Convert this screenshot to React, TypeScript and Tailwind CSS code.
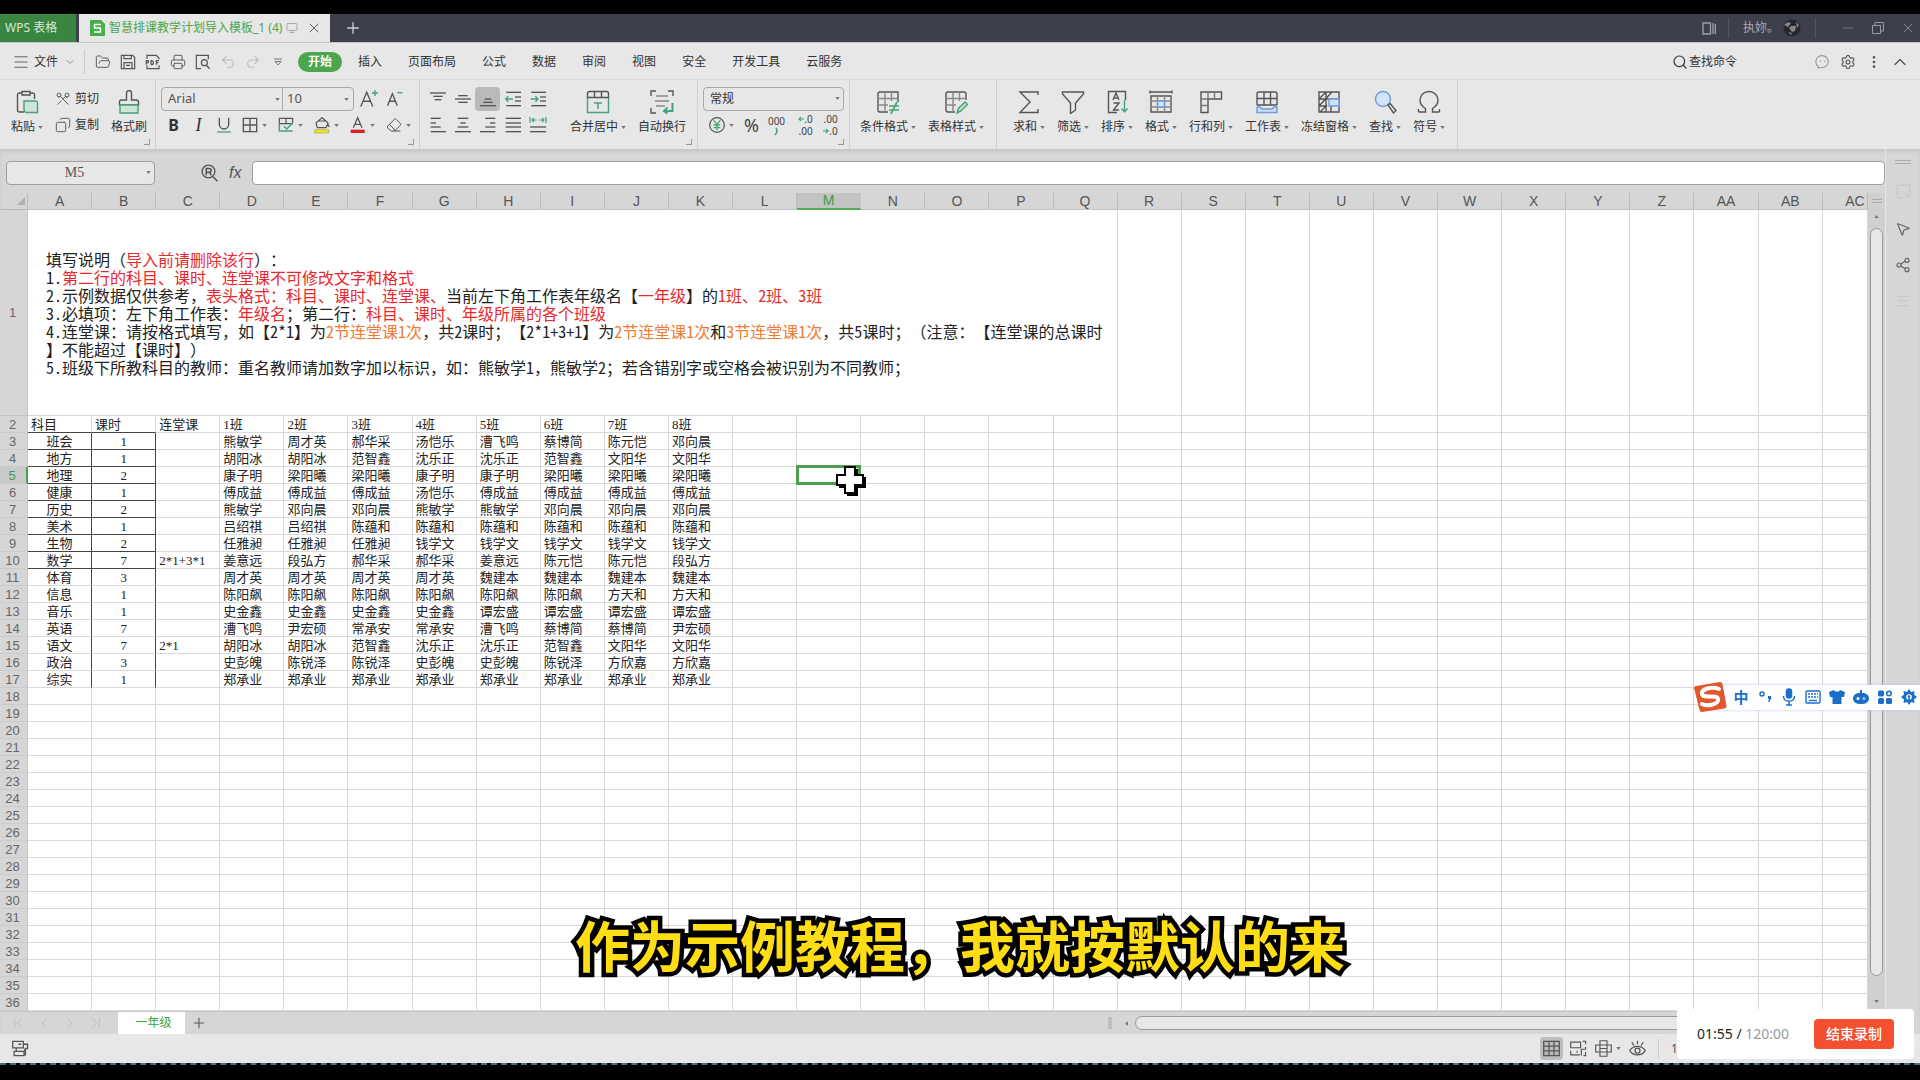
import React, { useState } from "react";
import {
  ChevronDown,
  ChevronLeft,
  ChevronRight,
  ChevronUp,
  ChevronFirst,
  ChevronLast,
  Copy,
  EllipsisVertical,
  Eraser,
  FolderOpen,
  Menu,
  Minus,
  Monitor,
  MousePointer2,
  Plus,
  Printer,
  Redo2,
  Scissors,
  Search,
  Settings,
  Share2,
  Undo2,
  X,
} from "lucide-react";
import { clsx } from "clsx";

const COLUMNS = [
  "A", "B", "C", "D", "E", "F", "G", "H", "I", "J", "K", "L", "M", "N", "O",
  "P", "Q", "R", "S", "T", "U", "V", "W", "X", "Y", "Z", "AA", "AB", "AC",
];

const MENUS = ["插入", "页面布局", "公式", "数据", "审阅", "视图", "安全", "开发工具", "云服务"];

// Sheet rows, starting at row 2
const ROWS: string[][] = [
  ["科目", "课时", "连堂课", "1班", "2班", "3班", "4班", "5班", "6班", "7班", "8班"],
  ["班会", "1", "", "熊敏学", "周才英", "郝华采", "汤恺乐", "漕飞鸣", "蔡博简", "陈元恺", "邓向晨"],
  ["地方", "1", "", "胡阳冰", "胡阳冰", "范智鑫", "沈乐正", "沈乐正", "范智鑫", "文阳华", "文阳华"],
  ["地理", "2", "", "康子明", "梁阳曦", "梁阳曦", "康子明", "康子明", "梁阳曦", "梁阳曦", "梁阳曦"],
  ["健康", "1", "", "傅成益", "傅成益", "傅成益", "汤恺乐", "傅成益", "傅成益", "傅成益", "傅成益"],
  ["历史", "2", "", "熊敏学", "邓向晨", "邓向晨", "熊敏学", "熊敏学", "邓向晨", "邓向晨", "邓向晨"],
  ["美术", "1", "", "吕绍祺", "吕绍祺", "陈蕴和", "陈蕴和", "陈蕴和", "陈蕴和", "陈蕴和", "陈蕴和"],
  ["生物", "2", "", "任雅昶", "任雅昶", "任雅昶", "钱学文", "钱学文", "钱学文", "钱学文", "钱学文"],
  ["数学", "7", "2*1+3*1", "姜意远", "段弘方", "郝华采", "郝华采", "姜意远", "陈元恺", "陈元恺", "段弘方"],
  ["体育", "3", "", "周才英", "周才英", "周才英", "周才英", "魏建本", "魏建本", "魏建本", "魏建本"],
  ["信息", "1", "", "陈阳飙", "陈阳飙", "陈阳飙", "陈阳飙", "陈阳飙", "陈阳飙", "方天和", "方天和"],
  ["音乐", "1", "", "史金鑫", "史金鑫", "史金鑫", "史金鑫", "谭宏盛", "谭宏盛", "谭宏盛", "谭宏盛"],
  ["英语", "7", "", "漕飞鸣", "尹宏硕", "常承安", "常承安", "漕飞鸣", "蔡博简", "蔡博简", "尹宏硕"],
  ["语文", "7", "2*1", "胡阳冰", "胡阳冰", "范智鑫", "沈乐正", "沈乐正", "范智鑫", "文阳华", "文阳华"],
  ["政治", "3", "", "史彭魄", "陈锐泽", "陈锐泽", "史彭魄", "史彭魄", "陈锐泽", "方欣嘉", "方欣嘉"],
  ["综实", "1", "", "郑承业", "郑承业", "郑承业", "郑承业", "郑承业", "郑承业", "郑承业", "郑承业"],
];

const ROW_NUMBERS = Array.from({ length: 35 }, (_, i) => i + 2);

type NotePart = { text: string; tone?: "red" | "orange" };

const red = (text: string): NotePart => ({ text, tone: "red" });
const orange = (text: string): NotePart => ({ text, tone: "orange" });
const plain = (text: string): NotePart => ({ text });

const NOTES: NotePart[][] = [
  [plain("填写说明（"), red("导入前请删除该行"), plain("）：")],
  [plain("1."), red("第二行的科目、课时、连堂课不可修改文字和格式")],
  [
    plain("2.示例数据仅供参考，"),
    red("表头格式：科目、课时、连堂课、"),
    plain("当前左下角工作表年级名【"),
    red("一年级"),
    plain("】的"),
    red("1班、2班、3班"),
  ],
  [plain("3.必填项：左下角工作表："), red("年级名"), plain("；第二行："), red("科目、课时、年级所属的各个班级")],
  [
    plain("4.连堂课：请按格式填写，如【2*1】为"),
    orange("2节连堂课1次"),
    plain("，共2课时；【2*1+3+1】为"),
    orange("2节连堂课1次"),
    plain("和"),
    orange("3节连堂课1次"),
    plain("，共5课时；（注意：【连堂课的总课时"),
  ],
  [plain("】不能超过【课时】）")],
  [plain("5.班级下所教科目的教师：重名教师请加数字加以标识，如：熊敏学1，熊敏学2；若含错别字或空格会被识别为不同教师；")],
];

interface ArtProps {
  size?: number;
  className?: string;
  children: React.ReactNode;
}

function Art({ size = 24, className, children }: ArtProps) {
  return (
    <svg
      width={size}
      height={size}
      viewBox="0 0 24 24"
      fill="none"
      stroke="#555"
      strokeWidth="1.4"
      className={clsx("shrink-0", className)}
      aria-hidden="true"
    >
      {children}
    </svg>
  );
}

function Caret() {
  return (
    <svg width="5" height="3" viewBox="0 0 6 4" className="shrink-0" aria-hidden="true">
      <path d="M0 0h6L3 4z" fill="#777" />
    </svg>
  );
}

const GREEN = "#46a278";
const BLUE = "#6f9ddc";

const art = {
  paste: (
    <Art>
      <path d="M9 22H4.500a2 2 0 0 1-2-2V5a2 2 0 0 1 2-2H7M15 3h2.500a2 2 0 0 1 2 2v4" />
      <path d="M7 1.500h8v3.500H7z" />
      <path d="M9 11h11.500a2 2 0 0 1 2 2v9.500H12a3 3 0 0 1-3-3z" fill="#cfe5da" stroke={GREEN} />
    </Art>
  ),
  brush: (
    <Art>
      <path d="M9.500 10V3a2.500 2.500 0 0 1 5 0v7h5a2 2 0 0 1 2 2v3h-19v-3a2 2 0 0 1 2-2z" />
      <path d="M3 15h18v8H3z" fill="#cfe5da" stroke={GREEN} />
    </Art>
  ),
  merge: (
    <Art>
      <path d="M1.500 8V3.500a2 2 0 0 1 2-2h17a2 2 0 0 1 2 2V8M1.500 7.500h21M8.500 1.500v6M15.500 1.500v6" />
      <path d="M1.500 8v14.500h21V8M8 13h8M12 13v6" stroke={GREEN} />
    </Art>
  ),
  wrap: (
    <Art>
      <path d="M1 6V1h5M18 1h5v5M1 18v5h5" />
      <path d="M6 6h12M5 11h14M6 16h9" stroke="#888" />
      <path d="M22.500 13v8H14m3.500-3.500L14 21l3.500 2.500" stroke={GREEN} strokeWidth="2" />
    </Art>
  ),
  condition: (
    <Art>
      <path d="M12 22H4a2 2 0 0 1-2-2V4a2 2 0 0 1 2-2h18v10" />
      <path d="M2 8.500h20M2 15h10M9 2v20M15.500 2v9" stroke="#888" />
      <path d="M13 16h10M13 20h10M21 12l-6 12" stroke={GREEN} strokeWidth="1.700" />
    </Art>
  ),
  tableStyle: (
    <Art>
      <path d="M11 22H4a2 2 0 0 1-2-2V4a2 2 0 0 1 2-2h16a2 2 0 0 1 2 2v6" />
      <path d="M2 8.500h20M2 15h10M9 2v20M15.500 2v9" stroke="#888" />
      <path d="M13 23l1.500-4.500L21 12l2.500 2.500L17 21z" fill="#bfe0cf" stroke={GREEN} />
    </Art>
  ),
  sum: (
    <Art>
      <path d="M21 5V2H3l10 10L3 22.500h18v-3.500" />
    </Art>
  ),
  filter: (
    <Art>
      <path d="M1.500 2h21v2L14.500 13v7l-5 3.500V13L1.500 4z" />
    </Art>
  ),
  sort: (
    <Art>
      <path d="M12 22.500H3.500V1.500h17V10" />
      <path d="M8 10l3-7 3 7M9 8h4M8.500 13h5.500l-5.500 7H14" />
      <path d="M19.500 10v12m-3-3.500 3 3.500 3-3.500" stroke={GREEN} />
    </Art>
  ),
  format: (
    <Art>
      <path d="M1 2h22M1 .5v3M23 .5v3" />
      <path d="M2 6h20v16H2z" />
      <path d="M2 11h20M2 17h20M8.500 6v16M15.500 6v16" stroke="#888" />
      <path d="M8.500 11h7v6h-7z" fill="#cfdff5" stroke={BLUE} />
    </Art>
  ),
  rowsCols: (
    <Art>
      <path d="M2 2h20.500v7H9v13.500H2z" />
      <path d="M9 2v7M15.500 2v7M2 9h7M2 15.500h7" stroke="#777" />
    </Art>
  ),
  worksheet: (
    <Art>
      <path d="M2 15V4a2 2 0 0 1 2-2h16a2 2 0 0 1 2 2v11M2 8.500h20M9 2v13M15.500 2v13M2 15h20" />
      <path d="M2 17h3l2 2h10l2-2h3v5.500H2z" fill="#cfdff5" stroke={BLUE} />
    </Art>
  ),
  freeze: (
    <Art>
      <path d="M2 2h20v20H2zM9 2v20M2 9h20M2 16h8M14 22v-6M2 9l7-7M2 16l13-14M3 22l7-7" />
      <path d="M12 9h10v7H12z" fill="#cfdff5" stroke={BLUE} />
    </Art>
  ),
  find: (
    <Art>
      <circle cx="10" cy="9" r="7.500" fill="#d3e2f7" stroke={BLUE} />
      <path d="M15 15l2-1.500 6 7-2.500 2.500z" />
    </Art>
  ),
  symbol: (
    <Art>
      <path d="M1.500 22h7v-3.500C4 16 3 13 3 10a9 8.500 0 0 1 18 0c0 3-1 6-5.500 8.500V22h7" />
      <path d="M1.500 19v3M22.500 19v3" />
    </Art>
  ),
};

interface BigButtonProps {
  icon: React.ReactNode;
  label: string;
  caret?: boolean;
}

function BigButton({ icon, label, caret = true }: BigButtonProps) {
  return (
    <button className="flex flex-col items-center gap-[5px] pt-[3px] text-xs leading-4">
      {icon}
      <span className="flex items-center gap-[3px] whitespace-nowrap">
        {label}
        {caret && <Caret />}
      </span>
    </button>
  );
}

function Group({ className, corner, children }: { className?: string; corner?: boolean; children: React.ReactNode }) {
  return (
    <div className={clsx("relative flex border-r border-[#d0d0d0] pt-[7px]", className)}>
      {children}
      {corner && <span className="absolute right-[5px] bottom-1 size-1.5 border-r border-b border-[#999]" />}
    </div>
  );
}

function SmallButton({ label, active, children }: { label: string; active?: boolean; children: React.ReactNode }) {
  return (
    <button
      aria-label={label}
      className={clsx("flex h-6 w-[25px] items-center justify-center rounded-sm", active && "bg-[#b9b9b9]")}
    >
      {children}
    </button>
  );
}

function DropButton({ label, children }: { label: string; children: React.ReactNode }) {
  return (
    <button aria-label={label} className="flex h-6 w-9 items-center gap-1 pl-1.5">
      {children}
      <Caret />
    </button>
  );
}

// Each row is [y, from, to]
function Lines({ rows, children }: { rows: number[][]; children?: React.ReactNode }) {
  return (
    <Art size={16} className="overflow-visible">
      {rows.map(([y, from, to]) => (
        <path key={y} d={`M${from} ${y}H${to}`} strokeWidth="2" />
      ))}
      {children}
    </Art>
  );
}

function SmallArrow({ flip }: { flip?: boolean }) {
  return (
    <svg width="6" height="6" viewBox="0 0 6 6" className={clsx(flip && "rotate-180")} aria-hidden="true">
      <path d="M6 3H1m2-2L1 3l2 2" fill="none" stroke={GREEN} strokeWidth="1.200" />
    </svg>
  );
}

function TitleBar() {
  return (
    <header className="flex h-7 items-center bg-[#3e3f4d] text-xs text-[#a9a9b2]">
      <button className="flex h-full w-[76px] items-center bg-[#3a8641] pl-[5px] text-[#d9e6d9]">WPS 表格</button>
      <div className="ml-[3px] flex h-full items-center bg-[#e7e7e7] pr-2 pl-[11px] text-[#4ba54c]">
        <svg width="15" height="16" viewBox="0 0 15 16" aria-hidden="true">
          <path d="M1 0h10l4 4v12H1a1 1 0 0 1-1-1V1a1 1 0 0 1 1-1z" fill="#46ad4a" />
          <path d="M11 4.500H4.500v3.500h6v4H4" fill="none" stroke="#fff" strokeWidth="1.500" />
        </svg>
        <span className="ml-1 whitespace-nowrap">智慧排课教学计划导入模板_1 (4)</span>
        <Monitor className="ml-1 size-3 text-[#999]" strokeWidth={1.5} />
        <button aria-label="关闭标签" className="ml-2 text-[#666]">
          <X className="size-4" strokeWidth={1.5} />
        </button>
      </div>
      <button aria-label="新建标签" className="ml-3.5 text-[#d0d0d6]">
        <Plus className="size-[18px]" strokeWidth={1.7} />
      </button>
      <div className="ml-auto flex items-center">
        <svg width="14" height="13" viewBox="0 0 14 13" fill="none" stroke="#a0a0aa" strokeWidth="1.300" aria-hidden="true">
          <path d="M1 1h7.500v11H1zM11 1v11M13.300 2v10" />
        </svg>
        <span className="ml-3 h-5 w-px bg-[#55565f]" />
        <span className="ml-3.5 w-9 whitespace-nowrap">执妳。</span>
        <svg width="18" height="18" viewBox="0 0 18 18" className="ml-1" aria-hidden="true">
          <circle cx="9" cy="9" r="8.500" fill="#26262b" />
          <path d="M1 6l4-3 3 1-3 4zM8 7l5 0-1 5-3 1-3-4zM13 3l3 3-2 3zM5 13l4 1-1 2z" fill="#858585" />
        </svg>
        <span className="ml-3.5 h-5 w-px bg-[#55565f]" />
        <button aria-label="最小化" className="ml-6 text-[#85858f]">
          <Minus className="size-4" strokeWidth={1.3} />
        </button>
        <button aria-label="还原" className="ml-4">
          <svg width="12" height="12" viewBox="0 0 12 12" fill="none" stroke="#9a9aa3" aria-hidden="true">
            <path d="M.5 3.500h8v8h-8zM3 3V.5h8.500V9H9" />
          </svg>
        </button>
        <button aria-label="关闭" className="mr-1 ml-4 text-[#9a9aa3]">
          <X className="size-4" strokeWidth={1.2} />
        </button>
      </div>
    </header>
  );
}

function MenuBar() {
  return (
    <nav className="flex h-[38px] items-center border-t border-b border-t-[#c5c5c9] border-b-[#d8d8d8] pt-0.5 text-xs text-[#333]">
      <button className="flex items-center pl-3">
        <Menu className="size-[18px] text-[#666]" strokeWidth={1.5} />
        <span className="ml-1">文件</span>
        <ChevronDown className="ml-1.5 size-3 text-[#999]" />
      </button>
      <span className="ml-2 h-6 w-px bg-[#ccc]" />
      <div className="ml-2.5 flex items-center gap-[9px] text-[#555]">
        <button aria-label="打开"><FolderOpen className="size-4" strokeWidth={1.4} /></button>
        <button aria-label="保存">
          <Art size={16}><path d="M2 2h17l3 3v17H2zM6 2v5h11V2M6 22v-9h12v9M9 17h6" strokeWidth="1.800" /></Art>
        </button>
        <button aria-label="输出为PDF">
          <Art size={16}>
            <path d="M3 7V2h14l4 4v2M3 17v5h18v-5" strokeWidth="1.800" />
            <path d="M2 16v-6h3v3H2M9 16v-6c5 0 5 6 0 6M17 16v-6h4M17 13h3" strokeWidth="1.800" />
          </Art>
        </button>
        <button aria-label="打印"><Printer className="size-4" strokeWidth={1.4} /></button>
        <button aria-label="打印预览">
          <Art size={16}>
            <path d="M9 22H2V2h18v6" strokeWidth="1.800" />
            <circle cx="14" cy="13" r="4.500" strokeWidth="1.800" />
            <path d="M17 17l5 5" strokeWidth="2" />
          </Art>
        </button>
        <button aria-label="撤销"><Undo2 className="size-4 text-[#bbb]" strokeWidth={1.6} /></button>
        <button aria-label="恢复"><Redo2 className="size-4 text-[#bbb]" strokeWidth={1.6} /></button>
        <button aria-label="自定义快速访问工具栏" className="flex w-4 flex-col items-center">
          <svg width="8" height="8" viewBox="0 0 8 8" fill="none" stroke="#777" aria-hidden="true">
            <path d="M0 1h8M1 3.500h6L4 7z" />
          </svg>
        </button>
      </div>
      <button className="ml-3 h-5 rounded-full bg-[#4ca64d] px-2.5 font-bold text-white">开始</button>
      <div className="ml-4 flex items-center gap-[26px]">
        {MENUS.map((menu) => (
          <button key={menu} className="whitespace-nowrap">{menu}</button>
        ))}
      </div>
      <div className="ml-auto flex items-center text-[#555]">
        <button className="flex items-center text-[#333]">
          <Search className="size-4" strokeWidth={1.8} />
          <span className="ml-px">查找命令</span>
        </button>
        <button aria-label="反馈" className="ml-[78px]">
          <Art size={15}>
            <path d="M5 21v-3a10 9.500 0 1 1 5 2l-5 1zM8.500 9v2M15.500 9v2" stroke="#999" strokeWidth="1.800" />
          </Art>
        </button>
        <button aria-label="设置" className="ml-2.5"><Settings className="size-4" strokeWidth={1.7} /></button>
        <button aria-label="更多" className="ml-2.5"><EllipsisVertical className="size-4" /></button>
        <button aria-label="收起功能区" className="mr-2.5 ml-2"><ChevronUp className="size-5" strokeWidth={1.6} /></button>
      </div>
    </nav>
  );
}

function Ribbon() {
  const [font, setFont] = useState("Arial");
  const [size, setSize] = useState("10");
  const [numberFormat, setNumberFormat] = useState("常规");

  return (
    <section className="flex h-[69px] text-[#333]">
      <Group corner className="w-[156px] gap-3 pl-[11px]">
        <BigButton icon={art.paste} label="粘贴" />
        <div className="flex flex-col gap-0.5 text-xs">
          <button className="flex h-6 items-center gap-1 whitespace-nowrap">
            <Scissors className="size-4 rotate-90 text-[#555]" strokeWidth={1.4} />剪切
          </button>
          <button className="flex h-6 items-center gap-1 whitespace-nowrap">
            <Copy className="size-4 -scale-x-100 text-[#555]" strokeWidth={1.4} />复制
          </button>
        </div>
        <BigButton icon={art.brush} label="格式刷" caret={false} />
      </Group>

      <Group corner className="w-[264px] flex-col gap-0.5 pl-[5px]">
        <div className="flex h-6 items-center">
          <div className="relative flex h-6 rounded border border-[#a8a8a8] text-[13px]">
            <select
              aria-label="字体"
              value={font}
              onChange={(e) => setFont(e.target.value)}
              className="w-[121px] appearance-none border-r border-[#a8a8a8] pl-1.5 text-[#555]"
            >
              <option>Arial</option>
            </select>
            <select
              aria-label="字号"
              value={size}
              onChange={(e) => setSize(e.target.value)}
              className="w-[70px] appearance-none pl-1 text-[#555]"
            >
              <option>10</option>
            </select>
            <span className="pointer-events-none absolute top-2.5 left-[113px]"><Caret /></span>
            <span className="pointer-events-none absolute top-2.5 right-1"><Caret /></span>
          </div>
          <button aria-label="增大字号" className="ml-1.5">
            <Art size={18} className="overflow-visible">
              <path d="M1 22L9 3l8 19M4 15h10" strokeWidth="1.800" />
              <path d="M20 0v8M16 4h8" stroke={GREEN} strokeWidth="1.800" />
            </Art>
          </button>
          <button aria-label="减小字号" className="ml-2">
            <Art size={18}>
              <path d="M2 21L8.500 5 15 21M4.500 15h8" strokeWidth="1.800" />
              <path d="M15 3.500h7" stroke={GREEN} strokeWidth="1.800" />
            </Art>
          </button>
        </div>
        <div className="flex">
          <SmallButton label="加粗"><b className="text-base">B</b></SmallButton>
          <SmallButton label="倾斜"><i className="font-['Liberation_Serif',serif] text-lg">I</i></SmallButton>
          <SmallButton label="下划线">
            <Art size={16}>
              <path d="M5 1v10a7 7 0 0 0 14 0V1" strokeWidth="2" />
              <path d="M2 22.500h20" stroke={GREEN} strokeWidth="2" />
            </Art>
          </SmallButton>
          <DropButton label="边框">
            <Art size={16}><path d="M2 2h20v20H2zM12 2v20M2 12h20" strokeWidth="2" /></Art>
          </DropButton>
          <DropButton label="绘图边框">
            <Art size={16}>
              <path d="M22 9V2H2v8h20M12 2v8" strokeWidth="1.800" />
              <path d="M2 10v11h20M9 14l4 4 9-9" stroke={GREEN} strokeWidth="2.200" />
            </Art>
          </DropButton>
          <DropButton label="填充颜色">
            <Art size={16} className="overflow-visible">
              <path d="M12 1L3 9l2 7h13l3-7zM6 6h12M21 11l2 4" strokeWidth="1.800" />
              <path d="M1 19h21v5H1z" fill="#ece52a" stroke="#a9a64a" strokeWidth="1" />
            </Art>
          </DropButton>
          <DropButton label="字体颜色">
            <Art size={16} className="overflow-visible">
              <path d="M5 16L11.500 1 18 16M7.500 11h8" strokeWidth="1.900" />
              <path d="M1 19h21v5H1z" fill="#dd1f26" stroke="none" />
            </Art>
          </DropButton>
          <DropButton label="清除"><Eraser className="size-4 text-[#555]" strokeWidth={1.5} /></DropButton>
        </div>
      </Group>

      <Group corner className="w-[278px] gap-5 pl-[5px]">
        <div className="flex flex-col gap-0.5">
          <div className="flex">
            <SmallButton label="顶端对齐"><Lines rows={[[3, 0, 24], [8, 5, 19], [13, 7, 17]]} /></SmallButton>
            <SmallButton label="垂直居中"><Lines rows={[[7, 5, 19], [12, 0, 24], [17, 5, 19]]} /></SmallButton>
            <SmallButton label="底端对齐" active><Lines rows={[[12, 7, 17], [17, 5, 19], [22, 0, 24]]} /></SmallButton>
            <SmallButton label="减少缩进">
              <Lines rows={[[2, 2, 24], [9, 15, 24], [15, 15, 24], [22, 2, 24]]}>
                <path d="M12 12H1m4-4-4 4 4 4" stroke={GREEN} strokeWidth="2" />
              </Lines>
            </SmallButton>
            <SmallButton label="增加缩进">
              <Lines rows={[[2, 2, 24], [9, 15, 24], [15, 15, 24], [22, 2, 24]]}>
                <path d="M1 12h11m-4-4 4 4-4 4" stroke={GREEN} strokeWidth="2" />
              </Lines>
            </SmallButton>
          </div>
          <div className="flex">
            <SmallButton label="左对齐"><Lines rows={[[2, 1, 16], [9, 1, 9], [15, 1, 16], [22, 1, 24]]} /></SmallButton>
            <SmallButton label="水平居中"><Lines rows={[[2, 4, 20], [9, 8, 16], [15, 4, 20], [22, 0, 24]]} /></SmallButton>
            <SmallButton label="右对齐"><Lines rows={[[2, 8, 23], [9, 15, 23], [15, 8, 23], [22, 0, 23]]} /></SmallButton>
            <SmallButton label="两端对齐"><Lines rows={[[2, 1, 24], [9, 1, 24], [15, 1, 24], [22, 1, 24]]} /></SmallButton>
            <SmallButton label="分散对齐">
              <Lines rows={[[15, 0, 24], [22, 0, 24]]}>
                <path d="M0 0v9M24 0v9M10 4.500H3m3-3-3 3 3 3M14 4.500h7m-3-3 3 3-3 3" stroke={GREEN} strokeWidth="1.800" />
              </Lines>
            </SmallButton>
          </div>
        </div>
        <div className="flex gap-3">
          <BigButton icon={art.merge} label="合并居中" />
          <BigButton icon={art.wrap} label="自动换行" caret={false} />
        </div>
      </Group>

      <Group corner className="w-[152px] flex-col gap-0.5 pl-[5px]">
        <div className="relative w-[141px]">
          <select
            aria-label="数字格式"
            value={numberFormat}
            onChange={(e) => setNumberFormat(e.target.value)}
            className="block h-6 w-full appearance-none rounded border border-[#a8a8a8] pl-1.5 text-xs"
          >
            <option>常规</option>
          </select>
          <span className="pointer-events-none absolute top-2.5 right-1"><Caret /></span>
        </div>
        <div className="flex text-[10px] leading-3 text-[#444]">
          <DropButton label="货币">
            <Art size={16}>
              <circle cx="12" cy="12" r="11" strokeWidth="1.800" />
              <path d="M7 5l5 6 5-6M7 12h10M7 16h10M12 11v9" stroke={GREEN} strokeWidth="2" />
            </Art>
          </DropButton>
          <SmallButton label="百分比"><span className="text-lg">%</span></SmallButton>
          <SmallButton label="千位分隔">
            <span className="flex flex-col items-center">
              000
              <svg width="4" height="9" viewBox="0 0 4 9" aria-hidden="true">
                <path d="M2 1c2 3 1 5-1 7" fill="none" stroke={GREEN} strokeWidth="1.600" />
              </svg>
            </span>
          </SmallButton>
          <span className="flex pl-1">
            <SmallButton label="增加小数位">
              <span className="flex flex-col items-end">
                <span className="flex items-center"><SmallArrow />.0</span>
                <span>.00</span>
              </span>
            </SmallButton>
            <SmallButton label="减少小数位">
              <span className="flex flex-col items-end">
                <span>.00</span>
                <span className="flex items-center"><SmallArrow flip />.0</span>
              </span>
            </SmallButton>
          </span>
        </div>
      </Group>

      <Group className="w-[147px] gap-3 pl-2.5">
        <BigButton icon={art.condition} label="条件格式" />
        <BigButton icon={art.tableStyle} label="表格样式" />
      </Group>

      <Group className="gap-3 pr-3 pl-4">
        <BigButton icon={art.sum} label="求和" />
        <BigButton icon={art.filter} label="筛选" />
        <BigButton icon={art.sort} label="排序" />
        <BigButton icon={art.format} label="格式" />
        <BigButton icon={art.rowsCols} label="行和列" />
        <BigButton icon={art.worksheet} label="工作表" />
        <BigButton icon={art.freeze} label="冻结窗格" />
        <BigButton icon={art.find} label="查找" />
        <BigButton icon={art.symbol} label="符号" />
      </Group>
    </section>
  );
}

function FormulaBar() {
  return (
    <div className="flex h-11 items-center pt-3 pb-2 pl-1.5">
      <div className="relative w-[149px]">
        <input
          aria-label="名称框"
          defaultValue="M5"
          className="block h-6 w-full rounded border border-[#a0a0a0] bg-[#e7e7e7] pr-3 text-center font-['Liberation_Serif',serif] text-sm text-[#555]"
        />
        <span className="pointer-events-none absolute top-2.5 right-1"><Caret /></span>
      </div>
      <button aria-label="浏览公式结果" className="ml-[46px]">
        <Art size={18}>
          <circle cx="10" cy="10" r="8.500" strokeWidth="1.800" />
          <path d="M7 15V6h4a2.500 2.500 0 0 1 0 5H7m4 0 3 4M16 17l6 6" strokeWidth="2" />
        </Art>
      </button>
      <i className="ml-2.5 w-[23px] font-['Liberation_Sans',sans-serif] text-base text-[#555]">fx</i>
      <input aria-label="编辑栏" className="h-6 min-w-0 flex-1 rounded border border-[#a0a0a0] bg-white px-2 text-xs" />
    </div>
  );
}

function Notes() {
  return (
    <div className="pl-[18px] text-left font-['Noto_Sans_CJK_SC',sans-serif] text-base leading-[18px] whitespace-nowrap text-[#222] [text-spacing-trim:space-all]">
      {NOTES.map((line, i) => (
        <p key={i}>
          {line.map((part) =>
            // digits and signs use the font's half-width forms
            part.text.split(/([0-9*+.]+)/).filter(Boolean).map((piece, j) => (
              <span
                key={`${part.text}-${j}`}
                className={clsx(
                  part.tone === "red" && "text-[#e8292c]",
                  part.tone === "orange" && "text-[#ee7a33]",
                  /^[0-9*+.]/.test(piece) && "[font-feature-settings:'hwid']"
                )}
              >
                {piece}
              </span>
            ))
          )}
        </p>
      ))}
    </div>
  );
}

function Selection() {
  return (
    <div className="absolute -inset-x-px -top-0.5 -bottom-0.5 z-10 border-[3px] border-[#4c9f50]">
      {/* Cell pointer */}
      <svg width="30" height="30" viewBox="0 0 30 30" className="absolute top-[-2px] left-[37px]" aria-hidden="true">
        <path d="M11 3h11v8h8v11h-8v8H11v-8H3V11h8z" fill="#000" />
        <path d="M9 1h10v8h8v10h-8v8H9v-8H1V9h8z" fill="#fff" stroke="#000" strokeWidth="2" />
      </svg>
    </div>
  );
}

function Sheet() {
  return (
    <table className="w-full table-fixed border-separate border-spacing-0">
      <colgroup>
        <col className="w-7" />
        {COLUMNS.map((col, i) => (
          <col key={col} className={i === COLUMNS.length - 1 ? "w-[45px]" : undefined} />
        ))}
      </colgroup>
      <thead>
        <tr className="font-['Liberation_Sans',sans-serif] text-sm leading-4 text-[#555]">
          <td className="h-[17px] border-r border-b border-[#bbb] p-0">
            <svg width="8" height="8" viewBox="0 0 8 8" className="mr-0.5 ml-auto" aria-hidden="true">
              <path d="M8 0v8H0z" fill="#b0b0b0" />
            </svg>
          </td>
          {COLUMNS.map((col) => (
            <th
              key={col}
              scope="col"
              className={clsx(
                "h-[17px] overflow-hidden border-r p-0 font-normal",
                col === "M"
                  ? "border-b-2 border-[#c3c3c3] border-b-[#55ab58] bg-[#c3c3c3] leading-[15px] text-[#3f9a43]"
                  : "border-b border-r-[#bcbcbc] border-b-[#c4c4c4]"
              )}
            >
              <span className={clsx("block", col === "AC" && "w-16")}>{col}</span>
            </th>
          ))}
        </tr>
      </thead>
      <tbody className="bg-white">
        <tr>
          <th scope="row" className="h-[206px] border-r border-b border-[#c4c4c4] bg-[#d6d6d6] p-0 pr-0.5 font-['Liberation_Sans',sans-serif] text-[13px] font-normal text-[#666]">
            1
          </th>
          <td colSpan={17} className="border-r border-b border-[#d6d6d6] p-0">
            <Notes />
          </td>
          {COLUMNS.slice(17).map((col) => (
            <td key={col} className="border-r border-b border-[#d6d6d6] p-0" />
          ))}
        </tr>
        {ROW_NUMBERS.map((row) => {
          const cells = ROWS[row - 2] ?? [];
          return (
            <tr key={row}>
              <th
                scope="row"
                className={clsx(
                  "h-[17px] border-b border-b-[#cbcbcb] p-0 pt-0.5 pr-0.5 font-['Liberation_Sans',sans-serif] text-[13px] leading-[14px] font-normal",
                  row === 5
                    ? "border-r-2 border-r-[#4c9f50] bg-[#c9c9c9] text-[#3f9a43]"
                    : "border-r border-r-[#c4c4c4] bg-[#d6d6d6] text-[#666]"
                )}
              >
                {row}
              </th>
              {COLUMNS.map((col, i) => (
                <td
                  key={col}
                  className={clsx(
                    "relative h-[17px] border-r border-b p-0 pt-0.5 font-['Liberation_Serif','Noto_Sans_CJK_SC',serif] text-[13px] leading-[14px] whitespace-nowrap text-[#222]",
                    i < 2 && row > 2 ? "text-center" : "pl-[3px]",
                    i < 2 && row > 2 && row < 18 ? "border-r-[#444]" : "border-r-[#d6d6d6]",
                    i < 2 && row < 11 ? "border-b-[#444]" : "border-b-[#d9d9d9]"
                  )}
                >
                  {cells[i]}
                  {col === "M" && row === 5 && <Selection />}
                </td>
              ))}
            </tr>
          );
        })}
      </tbody>
    </table>
  );
}

function VerticalScroll() {
  return (
    <div className="flex w-[17px] shrink-0 flex-col items-center bg-[#d0d0d0]">
      <div className="flex h-[35px] flex-col items-center justify-between pt-1.5 pb-2.5">
        <span className="h-1 w-2.5 border-y border-[#aaa]" />
        <span className="rotate-180"><Caret /></span>
      </div>
      <div className="w-[13px] flex-1 rounded-full border border-[#999] bg-[#e7e7e7]" />
      <div className="flex h-[35px] items-end pb-2"><Caret /></div>
    </div>
  );
}

function SheetTabs() {
  return (
    <div className="flex h-[23px] items-center border-t border-[#c8c8c8] text-xs">
      <div className="flex w-[118px] gap-2.5 pl-2.5 text-[#bdbdbd]">
        <ChevronFirst className="size-4" strokeWidth={1.5} />
        <ChevronLeft className="size-4" strokeWidth={1.5} />
        <ChevronRight className="size-4" strokeWidth={1.5} />
        <ChevronLast className="size-4" strokeWidth={1.5} />
      </div>
      <button className="h-full w-[67px] bg-white pl-1 text-[#3c9f40]">一年级</button>
      <button aria-label="新建工作表" className="ml-1.5 text-[#555]"><Plus className="size-4" strokeWidth={1.6} /></button>
      <div className="ml-auto flex w-[777px] items-center">
        <span className="h-3 w-1 bg-[#bdbdbd]" />
        <span className="ml-3 rotate-90"><Caret /></span>
        <div className="ml-1.5 h-3.5 flex-1 rounded-full border border-[#999] bg-[#e7e7e7]" />
      </div>
    </div>
  );
}

function SidePanel() {
  return (
    <aside className="flex w-[35px] shrink-0 flex-col items-center gap-5 border-l border-[#e6e6e6] pt-[11px] text-[#666]">
      <span className="h-1 w-4 border-y border-[#aaa]" />
      <Art size={15}><path d="M2 2h20v12M2 2v20h10M22 10v10l-6-2M14 14l6 8" stroke="#c4c4c4" /></Art>
      <button aria-label="选择" className="pt-0.5"><MousePointer2 className="size-4" strokeWidth={1.8} /></button>
      <button aria-label="分享"><Share2 className="size-4" strokeWidth={1.8} /></button>
      <Menu className="size-4 text-[#c4c4c4]" strokeWidth={1.5} />
    </aside>
  );
}

function StatusBar() {
  return (
    <footer className="flex h-[29px] items-center bg-[#e7e7e7] pr-[237px] pl-3 text-xs text-[#555]">
      <Art size={17}>
        <path d="M1 2h15v9H1zM16 6h6v6h-3M6 11v5M18 12v4M3 16h14v6H3zM9 6h4M19 12v9h-2" strokeWidth="1.800" />
      </Art>
      <div className="ml-auto flex items-center">
        <button aria-label="普通视图" className="flex size-[23px] items-center justify-center rounded-sm bg-[#bdbdbd]">
          <Art size={17}><path d="M1 2h22v20H1zM8.500 2v20M15.500 2v20M1 8.500h22M1 15.500h22" strokeWidth="1.800" /></Art>
        </button>
        <button aria-label="分页预览" className="ml-[7px]">
          <Art size={17}><path d="M1 3h14v8H1zM1 15v6h13M18 2h4v4M22 10v3h-6v9M22 17v5h-3M10 15v3" strokeWidth="1.600" /></Art>
        </button>
        <button aria-label="页面布局视图" className="ml-2 flex items-center gap-1">
          <Art size={17}><path d="M7 1h10v22H7zM1 7h22v10H1zM7 12h10" strokeWidth="1.600" /></Art>
          <Caret />
        </button>
        <button aria-label="护眼模式" className="ml-2">
          <Art size={17}>
            <path d="M1 15c5-8 17-8 22 0-5 8-17 8-22 0zM12 1v5M4 3l3 5M20 3l-3 5" strokeWidth="1.600" />
            <circle cx="12" cy="15" r="3.500" strokeWidth="1.800" />
          </Art>
        </button>
        <span className="ml-3 h-5 w-px bg-[#ccc]" />
        <span className="ml-3 w-3 whitespace-nowrap">100%</span>
      </div>
    </footer>
  );
}

function ImeBar() {
  return (
    <div className="absolute top-[681px] right-0 flex h-8 items-center">
      <div className="flex h-[25px] items-center gap-2 rounded-l bg-white pr-[3px] pl-[30px] text-[#1b6fc9] shadow-[0_0_3px_#a9c4e6]">
        <span className="w-4 text-center text-[15px] leading-4 font-bold">中</span>
        <svg width="16" height="16" viewBox="0 0 16 16" fill="#1b6fc9" aria-hidden="true">
          <circle cx="5" cy="5" r="2" fill="none" stroke="#1b6fc9" strokeWidth="1.500" />
          <path d="M11 7h3v3l-2 3h-1l1-3h-1z" />
        </svg>
        <svg width="16" height="18" viewBox="0 0 16 18" fill="none" stroke="#1b6fc9" strokeWidth="1.500" aria-hidden="true">
          <rect x="5.500" y="1" width="5" height="9" rx="2.500" fill="#1b6fc9" />
          <path d="M2.500 8c0 7 11 7 11 0M8 13v4M5 17h6" />
        </svg>
        <svg width="16" height="14" viewBox="0 0 16 14" fill="none" stroke="#1b6fc9" strokeWidth="1.400" aria-hidden="true">
          <rect x="1" y="1" width="14" height="12" rx="1" />
          <path d="M3 4h10M3 7h10" strokeDasharray="2 1" />
          <path d="M4 10.500h8" />
        </svg>
        <svg width="16" height="16" viewBox="0 0 16 16" fill="#1b6fc9" aria-hidden="true">
          <path d="M5 1c1 2 5 2 6 0l5 2-1 5h-2.500v7h-9V8H1L0 3z" />
        </svg>
        <svg width="16" height="16" viewBox="0 0 16 16" fill="#1b6fc9" aria-hidden="true">
          <path d="M7 1h2v3c4 0 7 2 7 5.500S13 15 8 15s-8-2-8-5.500S3 4 7 4z" />
          <circle cx="5" cy="9.500" r="1.500" fill="#fff" />
          <circle cx="11" cy="9.500" r="1.500" fill="#9cc3ee" />
        </svg>
        <svg width="16" height="16" viewBox="0 0 16 16" fill="#1b6fc9" aria-hidden="true">
          <rect x="1" y="1.500" width="6" height="6" rx="1.500" />
          <rect x="1" y="9" width="6" height="6" rx="1.500" />
          <rect x="9" y="9" width="6" height="6" rx="1.500" />
          <circle cx="12" cy="4.500" r="2.300" fill="none" stroke="#1b6fc9" strokeWidth="1.500" />
        </svg>
        <svg width="16" height="16" viewBox="0 0 16 16" fill="#1b6fc9" aria-hidden="true">
          <path d="M8 0l2 3 3.500-1-.5 3.500L16 8l-3 2.500.5 3.500-3.500-1-2 3-2-3-3.500 1 .5-3.500L0 8l3-2.500L2.500 2 6 3z" />
          <circle cx="8" cy="8" r="2.800" fill="#fff" />
          <circle cx="8" cy="7.500" r="1.300" />
          <path d="M7.300 8h1.400v4H7.300z" />
        </svg>
      </div>
      <svg width="34" height="32" viewBox="0 0 34 32" className="absolute top-0 -left-2.5" aria-hidden="true">
        <path d="M3 5L27 1q2 0 2.500 2l4 22q0 2-2 2.500L9 31q-2 0-2.500-2L1 7q0-2 2-2z" fill="#e2572b" />
        <path d="M26 8C19 5 8 8 9 13s15 0 16 5-10 8-16 5" fill="none" stroke="#fff" strokeWidth="4" strokeLinecap="round" />
      </svg>
    </div>
  );
}

function RecorderPanel() {
  return (
    <div className="absolute top-[1009px] right-1.5 flex h-[50px] w-[237px] items-center rounded bg-white pl-5 text-sm text-[#999]">
      <span className="font-['Noto_Sans',sans-serif] whitespace-nowrap">
        <span className="text-[#222]">01:55 /</span> 120:00
      </span>
      <button className="mr-5 ml-auto h-[30px] w-20 rounded bg-[#f4502f] text-sm font-medium text-white">结束录制</button>
    </div>
  );
}

export default function App() {
  return (
    <div className="relative min-h-screen overflow-hidden bg-black pt-3.5 font-['Noto_Sans','Noto_Sans_CJK_SC',sans-serif]">
      <TitleBar />
      <div className="bg-[#e7e7e7]">
        <MenuBar />
        <Ribbon />
      </div>
      <main className="flex bg-[#d6d6d6] shadow-[inset_0_3px_3px_#c8c8c8]">
        <div className="min-w-0 flex-1">
          <FormulaBar />
          <div className="flex">
            <div className="min-w-0 flex-1 overflow-hidden">
              <Sheet />
            </div>
            <VerticalScroll />
          </div>
          <SheetTabs />
        </div>
        <SidePanel />
      </main>
      <StatusBar />
      <div className="border-t-2 border-dashed border-[#3f6f8f]" />

      {/* Overlays */}
      <ImeBar />
      <RecorderPanel />
      <p className="pointer-events-none absolute inset-x-0 top-[903px] text-center font-['Noto_Sans_CJK_SC',sans-serif] text-[55px] leading-[80px] font-bold whitespace-nowrap text-[#fedd15] [-webkit-text-stroke:9px_#000] [paint-order:stroke_fill]">
        作为示例教程，我就按默认的来
      </p>
    </div>
  );
}
